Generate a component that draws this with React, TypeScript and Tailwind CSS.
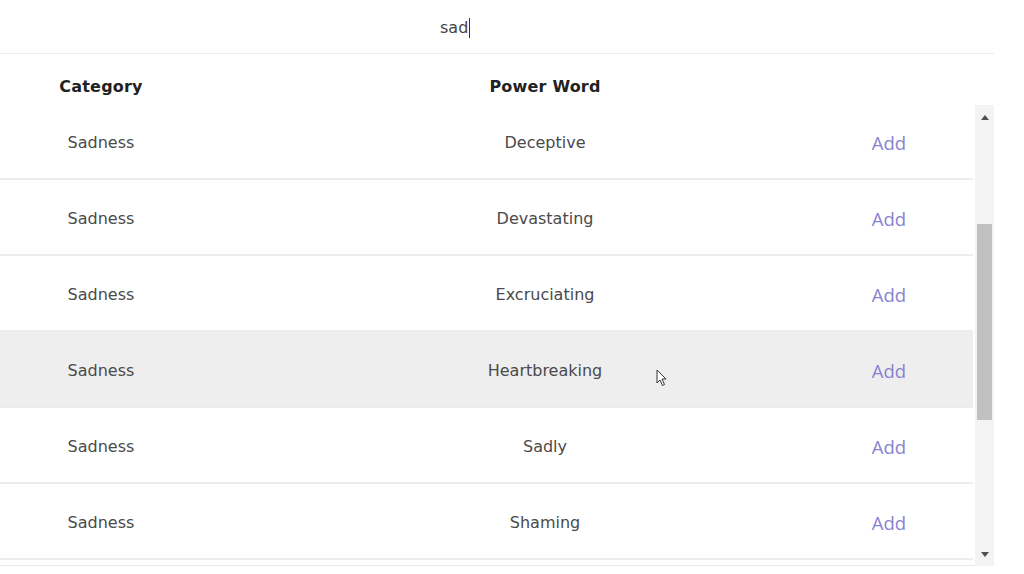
import React from "react";

const rows = [
  { cat: "Sadness", word: "Deceptive" },
  { cat: "Sadness", word: "Devastating" },
  { cat: "Sadness", word: "Excruciating" },
  { cat: "Sadness", word: "Heartbreaking", hover: true },
  { cat: "Sadness", word: "Sadly" },
  { cat: "Sadness", word: "Shaming" },
];

const font = { fontFamily: '"DejaVu Sans", Verdana, sans-serif' };

export default function App() {
  return (
    <div className="w-[1024px] h-[574px] bg-white overflow-hidden relative" style={font}>
      <div className="w-[994px]">
        {/* search */}
        <div className="h-[54px] border-b border-[#ececec] flex items-center pl-[440px] pt-[2px]">
          <span className="text-[16px] text-[#444] leading-none">sad</span>
          <span className="w-px h-[20px] bg-[#333] ml-px" />
        </div>
        {/* header */}
        <div className="h-[50px] flex pt-[23px] text-[16px] font-bold text-[#222] leading-[19px] tracking-[0.2px]">
          <div className="w-[202px] text-center">Category</div>
          <div className="ml-[243px] w-[200px] text-center">Power Word</div>
        </div>
        {/* body */}
        <div className="h-[462px] flex border-b border-[#e8e8e8]">
          <div className="w-[973px]">
            {rows.map((r, i) => (
              <div
                key={i}
                className={`h-[76px] flex items-center pt-[3px] border-b-2 border-[#ececec] ${r.hover ? "bg-[#eeeeee]" : "bg-white"}`}
              >
                <div className="w-[202px] text-center text-[16px] text-[#4a4a4a]">{r.cat}</div>
                <div className="ml-[243px] w-[200px] text-center text-[16px] text-[#4a4a4a]">{r.word}</div>
                <div
                  className="ml-[194px] w-[100px] text-center text-[18.5px] text-[#8784cf]"
                  style={{ fontFamily: '"Open Sans", "Segoe UI", sans-serif' }}
                >
                  Add
                </div>
              </div>
            ))}
          </div>
          {/* scrollbar */}
          <div className="ml-[2px] w-[19px] h-[461px] mt-px bg-[#f3f3f3] flex flex-col items-center">
            <div className="h-[24px] flex items-center justify-center">
              <svg width="8" height="5" viewBox="0 0 8 5">
                <path d="M0 5 L4 0 L8 5 Z" fill="#505050" />
              </svg>
            </div>
            <div className="mt-[95px] w-[15px] h-[196px] bg-[#c1c1c1]" />
            <div className="flex-1" />
            <div className="h-[24px] flex items-center justify-center">
              <svg width="8" height="5" viewBox="0 0 8 5">
                <path d="M0 0 L4 5 L8 0 Z" fill="#505050" />
              </svg>
            </div>
          </div>
        </div>
      </div>
      {/* mouse cursor */}
      <svg className="absolute left-[656px] top-[369px]" width="12" height="18" viewBox="0 0 12 18">
        <path d="M1 1 L1 14 L4 11 L6.5 16.5 L8.5 15.5 L6 10 L10 10 Z" fill="#fff" stroke="#333" strokeWidth="1" strokeLinejoin="round" />
      </svg>
    </div>
  );
}
